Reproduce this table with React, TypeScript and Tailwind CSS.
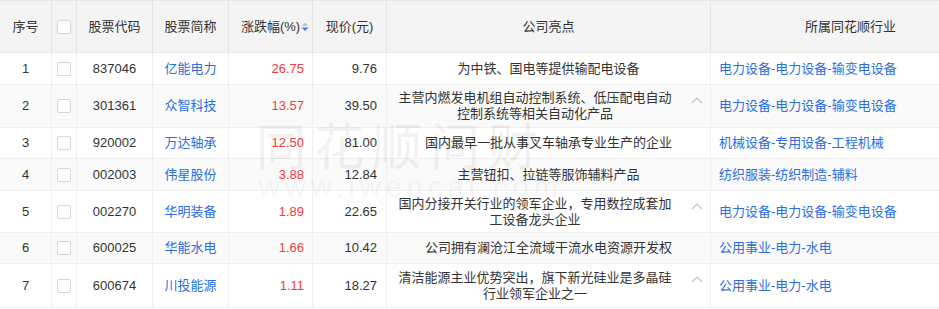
import React from 'react'

type Row = {
  no: number
  code: string
  name: string
  chg: string
  price: string
  highlight: string
  industry: string
  h: string
  more?: boolean
}

const ROWS: Row[] = [
  { no: 1, code: '837046', name: '亿能电力', chg: '26.75', price: '9.76', highlight: '为中铁、国电等提供输配电设备', industry: '电力设备-电力设备-输变电设备', h: 'h-[32px]' },
  { no: 2, code: '301361', name: '众智科技', chg: '13.57', price: '39.50', highlight: '主营内燃发电机组自动控制系统、低压配电自动控制系统等相关自动化产品', industry: '电力设备-电力设备-输变电设备', h: 'h-[43px]', more: true },
  { no: 3, code: '920002', name: '万达轴承', chg: '12.50', price: '81.00', highlight: '国内最早一批从事叉车轴承专业生产的企业', industry: '机械设备-专用设备-工程机械', h: 'h-[31px]' },
  { no: 4, code: '002003', name: '伟星股份', chg: '3.88', price: '12.84', highlight: '主营钮扣、拉链等服饰辅料产品', industry: '纺织服装-纺织制造-辅料', h: 'h-[32px]' },
  { no: 5, code: '002270', name: '华明装备', chg: '1.89', price: '22.65', highlight: '国内分接开关行业的领军企业，专用数控成套加工设备龙头企业', industry: '电力设备-电力设备-输变电设备', h: 'h-[42px]', more: true },
  { no: 6, code: '600025', name: '华能水电', chg: '1.66', price: '10.42', highlight: '公司拥有澜沧江全流域干流水电资源开发权', industry: '公用事业-电力-水电', h: 'h-[31px]' },
  { no: 7, code: '600674', name: '川投能源', chg: '1.11', price: '18.27', highlight: '清洁能源主业优势突出，旗下新光硅业是多晶硅行业领军企业之一', industry: '公用事业-电力-水电', h: 'h-[44px]', more: true },
]

const GRID = 'grid grid-cols-[52px_25px_76px_76px_84px_74px_324px_280px]'

function Checkbox() {
  return <span className="block w-[14px] h-[14px] rounded-[2px] border border-[#d6d6d6] bg-white" />
}

function SortIcon() {
  return (
    <svg width="8" height="10" viewBox="0 0 8 10" className="absolute left-full top-1/2 -translate-y-1/2 ml-[1px]">
      <path d="M0.5 4 L4 0.5 L7.5 4 Z" fill="#c0c4cc" />
      <path d="M0.5 5.5 L7.5 5.5 L4 9 Z" fill="#3b7de9" />
    </svg>
  )
}

function Chevron() {
  return (
    <svg width="12" height="7" viewBox="0 0 12 7">
      <polyline points="1,6 6,1 11,6" fill="none" stroke="#c4c4c4" strokeWidth="1.2" />
    </svg>
  )
}

export default function App() {
  const cell = 'border-r border-[#efefef] flex items-center'
  const head = 'border-r border-[#e6e6e6] flex items-center justify-center'

  return (
    <div className="relative w-[939px] h-[309px] overflow-hidden bg-white text-[13px] text-[#333] font-['Liberation_Sans','Noto_Sans_CJK_SC',sans-serif]">
      <div className="w-[991px]">
        {/* header */}
        <div className={`${GRID} h-[53px] bg-[#f4f4f4] border-t border-b border-[#e6e6e6]`}>
          <div className={head}>序号</div>
          <div className={head}><Checkbox /></div>
          <div className={head}>股票代码</div>
          <div className={head}>股票简称</div>
          <div className={head}>
            <span className="relative">
              涨跌幅(%)
              <SortIcon />
            </span>
          </div>
          <div className={head}>现价(元)</div>
          <div className={head}>公司亮点</div>
          <div className={head}>所属同花顺行业</div>
        </div>

        {ROWS.map((r, i) => (
          <div key={r.no} className={`${GRID} ${r.h} border-b border-[#efefef] ${i % 2 === 1 ? 'bg-[#fafafa]' : 'bg-white'}`}>
            <div className={`${cell} justify-center`}>{r.no}</div>
            <div className={`${cell} justify-center`}><Checkbox /></div>
            <div className={`${cell} justify-center`}>{r.code}</div>
            <div className={`${cell} justify-center text-[#2b6de3]`}>{r.name}</div>
            <div className={`${cell} justify-end pr-[8px] text-[#f03c3c]`}>{r.chg}</div>
            <div className={`${cell} justify-end pr-[9px]`}>{r.price}</div>
            {r.more ? (
              <div className={`${cell} items-stretch`}>
                <div className="flex-1 flex items-center justify-center px-[10px]">
                  <p className="text-center leading-[16px]">{r.highlight}</p>
                </div>
                <div className="w-[27px] pt-[12px] flex justify-center items-start">
                  <Chevron />
                </div>
              </div>
            ) : (
              <div className={`${cell} justify-center`}>{r.highlight}</div>
            )}
            <div className="flex items-center pl-[8px] text-[#2b6de3]">{r.industry}</div>
          </div>
        ))}
      </div>

      {/* watermark */}
      <div className="pointer-events-none absolute left-[256px] top-[118px] text-[50px] leading-none tracking-[8px] text-black/[0.05] font-['Noto_Sans_CJK_SC',sans-serif]">
        同花顺问财
      </div>
      <div className="pointer-events-none absolute left-[259px] top-[173px] text-[29px] leading-none tracking-[5px] text-black/[0.05]">
        www.iwencai.com
      </div>
    </div>
  )
}
